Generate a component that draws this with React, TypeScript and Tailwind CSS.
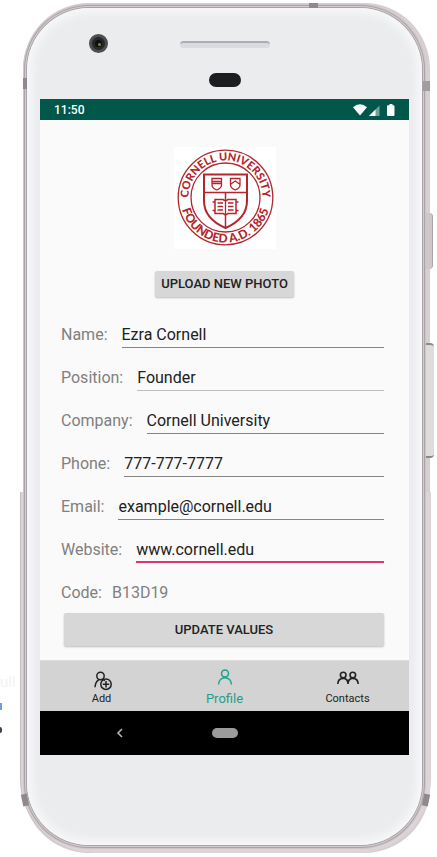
import React, { useState } from "react";

type Field = { id: string; label: string; value: string; type: string; line: string };

const FIELDS: Field[] = [
  { id: "name", label: "Name:", value: "Ezra Cornell", type: "text", line: "border-b border-[#858585]" },
  { id: "position", label: "Position:", value: "Founder", type: "text", line: "border-b border-[#bdbdbd]" },
  { id: "company", label: "Company:", value: "Cornell University", type: "text", line: "border-b border-[#858585]" },
  { id: "phone", label: "Phone:", value: "777-777-7777", type: "tel", line: "border-b border-[#858585]" },
  { id: "email", label: "Email:", value: "example@cornell.edu", type: "email", line: "border-b border-[#858585]" },
  { id: "website", label: "Website:", value: "www.cornell.edu", type: "text", line: "border-b-2 border-[#e0356f]" },
];

function Seal() {
  return (
    <svg viewBox="0 0 102 102" className="size-[102px] bg-white" role="img" aria-label="Cornell University seal">
      <defs>
        <path id="seal-top" d="M 14.5 50.5 A 37 37 0 0 1 88.500 50.5" />
        <path id="seal-bottom" d="M 6.500 50.500 A 45 45 0 0 0 96.500 50.500" />
      </defs>
      <g fill="none" stroke="#b3262d">
        <circle cx="51.500" cy="50.500" r="47.300" strokeWidth="1.300" />
        <circle cx="51.500" cy="50.500" r="34.500" strokeWidth="1.300" />
        <path d="M30 27.500H73V54C73 67 64 75.500 51.500 81C39 75.500 30 67 30 54Z" strokeWidth="2" />
        <path d="M30 45.500H73M51.500 45.500V81" strokeWidth="1.500" />
        <path d="M38 31.500H47.500V38Q47.500 41 42.700 43Q38 41 38 38ZM38 34.500H47.500M38 36.500H47.500" strokeWidth="1.300" />
        <path d="M56.500 31.500H66V38Q66 41 61.200 43Q56.500 41 56.500 38ZM57 37L61.200 34L65.500 37" strokeWidth="1.300" />
        <path d="M41 52.500H49L51.500 54L54 52.500H62V66.500H54L51.500 68L49 66.500H41Z" fill="#fff" strokeWidth="1.500" />
        <path d="M51.500 54V68M43.500 56H49M43.500 59.500H49M43.500 63H49M54 56H59.500M54 59.500H59.500M54 63H59.500M38.500 55H41M38.500 63.500H41M62 55H64.500M62 63.500H64.500" strokeWidth="1.300" />
      </g>
      <g fill="#b3262d" className="font-['Lato','Open_Sans',sans-serif] font-black">
        <text textAnchor="middle" className="text-[11px]">
          <textPath href="#seal-top" startOffset="50%">CORNELL UNIVERSITY</textPath>
        </text>
        <text textAnchor="middle" className="text-[12px]">
          <textPath href="#seal-bottom" startOffset="50%">FOUNDED A.D. 1865</textPath>
        </text>
      </g>
    </svg>
  );
}

function StatusBar() {
  return (
    <div className="flex h-[21px] items-center justify-between bg-[#00574a] pr-[13px] pl-[14px] text-white">
      <span className="text-[12px] leading-5 font-medium">11:50</span>
      <svg viewBox="0 0 44 14" className="h-[14px] w-[44px]" fill="#fff" aria-hidden="true">
        <path d="M1 4.200Q8 -1.600 15 4.200L8 12.500Z" />
        <path d="M17 13L27.500 2.500V13Z" opacity=".45" />
        <path d="M17 13L23.500 6.500V13Z" />
        <path d="M36 2.200H37.500V1H40.500V2.200H41.500Q42.500 2.200 42.500 3.200V12Q42.500 13 41.500 13H36Q35 13 35 12V3.200Q35 2.200 36 2.200Z" />
      </svg>
    </div>
  );
}

function PersonIcon() {
  return (
    <svg viewBox="0 0 16 16" className="size-4" fill="none" stroke="currentColor" strokeWidth="1.500" aria-hidden="true">
      <circle cx="8" cy="4.500" r="3.500" />
      <path d="M1.500 15.500C1.800 11.300 4.500 8.700 8 8.700S14.200 11.300 14.500 15.500" />
    </svg>
  );
}

function AddPersonIcon() {
  return (
    <svg viewBox="0 0 20 20" className="size-5" fill="none" stroke="currentColor" strokeWidth="1.500" aria-hidden="true">
      <circle cx="8.500" cy="5" r="3.700" />
      <path d="M3 16.200C3.200 12.400 4.500 10 7 8.600M10.500 8L13 9.500" />
      <circle cx="14" cy="13.200" r="5.200" />
      <path d="M14 10V16.400M10.800 13.200H17.200" />
    </svg>
  );
}

function PeopleIcon() {
  return (
    <svg viewBox="0 0 22 14" className="h-[14px] w-[22px]" fill="none" stroke="currentColor" strokeWidth="1.600" aria-hidden="true">
      <circle cx="6.200" cy="4" r="2.800" />
      <circle cx="15.800" cy="4" r="2.800" />
      <path d="M.8 13C1 9.500 3.200 7.400 6.200 7.400S10.900 9.500 11 13C11.100 9.500 12.800 7.400 15.800 7.400S21 9.500 21.200 13" />
    </svg>
  );
}

export default function App() {
  const [values, setValues] = useState<Record<string, string>>(
    Object.fromEntries(FIELDS.map((f) => [f.id, f.value]))
  );

  return (
    <div className="relative overflow-hidden bg-white pt-[3px] pr-[7px] pb-1 pl-[23px] font-['Roboto',sans-serif]">
      {/* Clipped page text behind the device */}
      <span className="absolute top-[672px] left-0 text-[15px] leading-5 text-[#f2f2f2]" aria-hidden="true">ull</span>
      <div className="absolute top-[703px] left-0 h-[7px] w-[2px] bg-[#6f9fce]" />
      <div className="absolute top-[727px] left-0 h-[6px] w-[2px] rounded-r bg-[#3c4652]" />

      <div className="relative isolate rounded-[66px] bg-[#d7ced1] pt-[5px] pr-2 pb-2 pl-1">
        {/* Lower rim, side keys and antenna bands */}
        <div className="absolute top-[489px] -right-px bottom-0 -left-[3px] -z-10 rounded-b-[74px] border-l border-[#c4bcbf] bg-[#dcd4d6]" />
        <div className="absolute top-[210px] -right-[3px] -z-10 h-[56px] w-2 rounded-r-sm border-r border-[#aaa4a6] bg-[#cfc8ca]" />
        <div className="absolute top-[340px] -right-[4px] -z-10 h-[115px] w-2 rounded-r-sm border-y-2 border-[#8c8789] bg-[#dedbd9]" />
        <div className="absolute top-[75px] left-0 z-10 h-[11px] w-1 bg-[#8f888c]" />
        <div className="absolute top-[78px] right-0 z-10 h-[10px] w-[7px] bg-[#a39c9f]" />
        <div className="absolute top-0 right-[112px] z-10 h-[5px] w-[9px] bg-[#8f888c]" />
        <div className="absolute right-px bottom-[47px] z-10 h-[12px] w-[6px] rotate-12 bg-[#8f888c]" />
        <div className="absolute bottom-[47px] -left-px z-10 h-[12px] w-[6px] -rotate-12 bg-[#8f888c]" />

        <div className="relative rounded-[62px] bg-[#ebecee] px-[13px] shadow-[inset_0_0_8px_5px_#f7f8fa,0_0_0_1px_#a8a3a6,0_0_0_2px_#d3ccce,0_0_0_3px_#aaa4a7,0_0_0_4px_#cdc5c8]">
          <div className="grid h-[91px] grid-cols-[1fr_90px_1fr] items-start">
            <div className="mt-[26px] ml-[49px] flex size-[19px] items-center justify-center rounded-full border-[3px] border-[#4c4e51] bg-[#25272a]">
              <div className="size-[7px] rounded-full bg-[#0d1012] p-[3px]">
                <div className="size-[3px] rounded-full bg-[#8a8530]" />
              </div>
            </div>
            <div className="flex flex-col items-center pt-[33px]">
              <div className="h-[7px] w-full rounded-full border-t-2 border-[#a9adb8] bg-[#d9dbe1]" />
              <div className="mt-[25px] h-[14px] w-[32px] rounded-full bg-[#1c1d21]" />
            </div>
          </div>

          <div className="bg-[#fafafa]">
            <StatusBar />

            <main className="pr-[25px] pb-[14px] pl-[21px]">
              <div className="flex flex-col items-center pt-[27px] pl-1">
                <Seal />
                <button type="button" className="mt-[22px] h-[26px] w-[139px] rounded-[2px] bg-[#d6d7d6] text-[13px] leading-4 font-medium text-[#222] shadow-[0_1px_2px_rgba(0,0,0,0.25)]">
                  UPLOAD NEW PHOTO
                </button>
              </div>

              <form className="mt-2" onSubmit={(e) => e.preventDefault()}>
                {FIELDS.map((f) => (
                  <div key={f.id} className="flex h-[43px] items-end gap-[14px]">
                    <label htmlFor={f.id} className="pb-px text-[16px] leading-6 text-[#808080]">
                      {f.label}
                    </label>
                    <input
                      id={f.id}
                      type={f.type}
                      value={values[f.id]}
                      onChange={(e) => setValues({ ...values, [f.id]: e.target.value })}
                      className={`h-[26px] min-w-0 flex-1 bg-transparent text-[16px] leading-6 text-[#212121] outline-none ${f.line}`}
                    />
                  </div>
                ))}
                <div className="flex h-[43px] items-end gap-[10px] pb-px text-[16px] leading-6 text-[#808080]">
                  <span>Code:</span>
                  <output>B13D19</output>
                </div>
                <div className="pt-[7px] pl-[3px]">
                  <button type="submit" className="h-[33px] w-full rounded-[2px] bg-[#d6d7d6] text-[13px] leading-4 font-medium text-[#222] shadow-[0_1px_2px_rgba(0,0,0,0.25)]">
                    UPDATE VALUES
                  </button>
                </div>
              </form>
            </main>

            <nav className="grid h-[51px] grid-cols-3 border-t border-[#dedede] bg-[#d3d3d3] text-[11px] leading-4 text-[#222]">
              <button type="button" className="flex flex-col items-center justify-end pb-1">
                <AddPersonIcon />
                <span>Add</span>
              </button>
              <button type="button" aria-current="page" className="flex flex-col items-center justify-end gap-1.5 pb-1 text-[13px] text-[#1f9f8c]">
                <PersonIcon />
                <span>Profile</span>
              </button>
              <button type="button" className="flex flex-col items-center justify-end gap-1.5 pb-1">
                <PeopleIcon />
                <span>Contacts</span>
              </button>
            </nav>

            <div className="grid h-[44px] grid-cols-[1fr_26px_1fr] items-center bg-black">
              <button type="button" aria-label="Back" className="mr-3 justify-self-center text-[#b5b5b5]">
                <svg viewBox="0 0 8 12" className="h-3 w-2" fill="none" stroke="currentColor" strokeWidth="1.600" aria-hidden="true">
                  <path d="M6 2L2 6L6 10" />
                </svg>
              </button>
              <button type="button" aria-label="Home" className="h-[10px] rounded-full bg-[#9b9b9b]" />
            </div>
          </div>

          <div className="h-[90px]" />
        </div>
      </div>
    </div>
  );
}
